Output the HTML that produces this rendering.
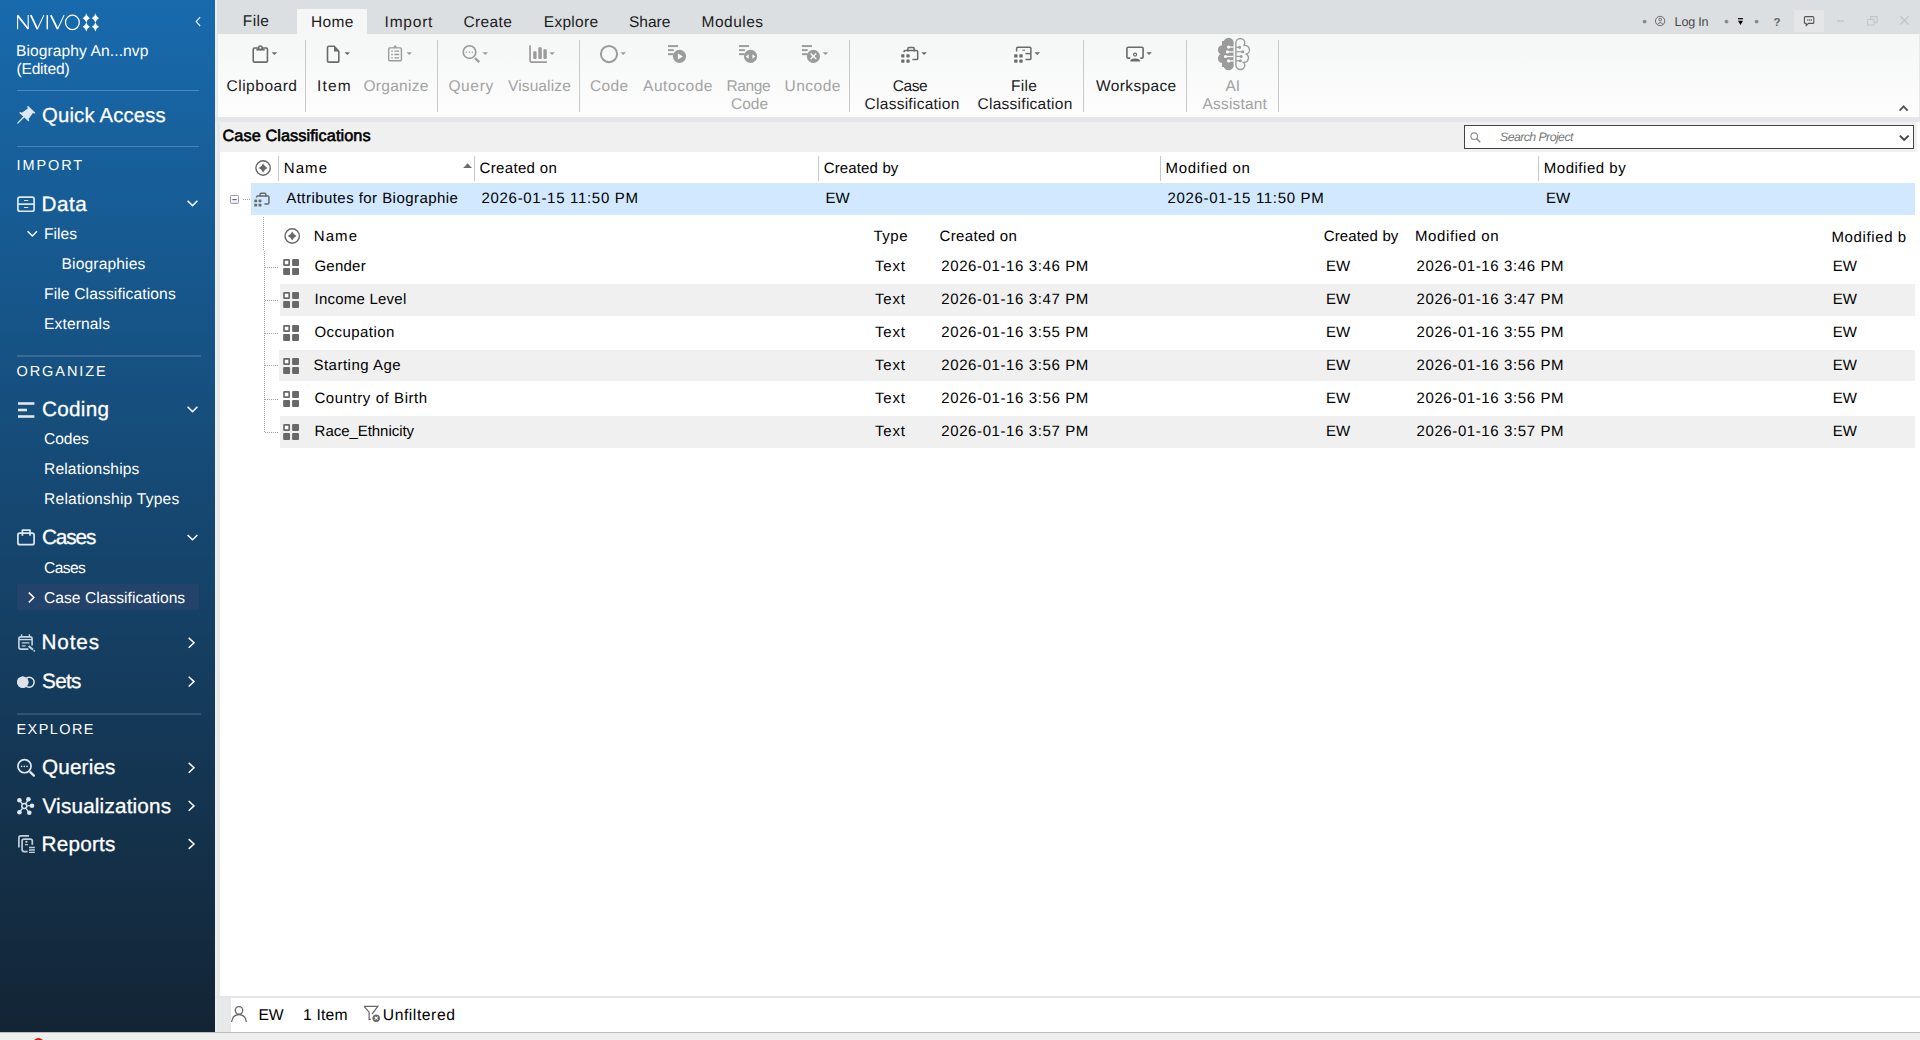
<!DOCTYPE html>
<html><head><meta charset="utf-8"><title>NVivo</title>
<style>
html,body{margin:0;padding:0;width:1920px;height:1040px;overflow:hidden;background:#fff;font-family:"Liberation Sans",sans-serif}
.t{position:absolute;white-space:pre;font-family:"Liberation Sans",sans-serif;text-rendering:geometricPrecision}
.b{position:absolute}
svg{position:absolute;overflow:visible}
</style></head><body>
<!-- backgrounds -->
<div class="b" style="left:0;top:0;width:1920px;height:1040px;background:#e7e8ea"></div>
<div class="b" style="left:215px;top:0;width:2px;height:1032px;background:#eeeeee"></div>
<div class="b" style="left:217px;top:0;width:1703px;height:34px;background:#dcdfe2"></div>
<div class="b" style="left:297px;top:9px;width:70px;height:25px;background:#f5f6f6"></div>
<div class="b" style="left:1794px;top:10px;width:30px;height:22px;background:#e5e6e7"></div>
<div class="b" style="left:218px;top:34px;width:1701px;height:83px;background:linear-gradient(#f5f6f6,#fdfdfd)"></div>
<div class="b" style="left:215px;top:117px;width:1705px;height:5px;background:#e4e6e9"></div>
<div class="b" style="left:220px;top:122px;width:1697px;height:30px;background:#f0f0f0"></div>
<div class="b" style="left:220px;top:152px;width:1700px;height:844px;background:#fff"></div>
<div class="b" style="left:1917px;top:122px;width:3px;height:30px;background:#fff"></div>
<!-- selected row -->
<div class="b" style="left:251px;top:183.2px;width:1664px;height:31.6px;background:#d1e8ff"></div>
<!-- alt rows -->
<div class="b" style="left:280px;top:284px;width:1635px;height:31.6px;background:#f0f0f0"></div>
<div class="b" style="left:279px;top:350.25px;width:1636px;height:30.4px;background:#f0f0f0"></div>
<div class="b" style="left:280px;top:416.25px;width:1635px;height:31.5px;background:#f0f0f0"></div>
<!-- status bar -->
<div class="b" style="left:215px;top:996px;width:1705px;height:2px;background:#e4e6ea"></div>
<div class="b" style="left:231px;top:998px;width:1689px;height:34px;background:#fff"></div>
<div class="b" style="left:0;top:1032px;width:1920px;height:1px;background:#bdbdbd"></div>
<div class="b" style="left:0;top:1033px;width:1920px;height:7px;background:#eeeeee"></div>
<div class="b" style="left:28px;top:1033px;width:20px;height:7px;overflow:hidden"><div class="b" style="left:4.5px;top:4.7px;width:11px;height:11px;border-radius:6px;background:#cb2114"></div></div>
<!-- sidebar -->
<div class="b" style="left:0;top:0;width:215px;height:1032px;background:linear-gradient(#186aad,#132434)"></div>
<div class="b" style="left:17px;top:90px;width:182px;height:1px;background:#4a88bf"></div>
<div class="b" style="left:17px;top:146px;width:182px;height:1px;background:#4784b8"></div>
<div class="b" style="left:17px;top:355px;width:184px;height:2px;background:#3b6a96"></div>
<div class="b" style="left:17px;top:713px;width:184px;height:2px;background:#34536f"></div>
<div class="b" style="left:17px;top:584px;width:182px;height:26px;background:#24436b"></div>
<!-- search box -->
<div class="b" style="left:1464px;top:125px;width:448px;height:22px;background:#fff;border:1px solid #444"></div>
<!-- ribbon separators -->
<div class="b" style="left:305px;top:40px;width:1px;height:72px;background:#c9c9c9"></div>
<div class="b" style="left:437px;top:40px;width:1px;height:72px;background:#c9c9c9"></div>
<div class="b" style="left:579px;top:40px;width:1px;height:72px;background:#c9c9c9"></div>
<div class="b" style="left:849px;top:40px;width:1px;height:72px;background:#c9c9c9"></div>
<div class="b" style="left:1083px;top:40px;width:1px;height:72px;background:#c9c9c9"></div>
<div class="b" style="left:1186px;top:40px;width:1px;height:72px;background:#c9c9c9"></div>
<div class="b" style="left:1278px;top:40px;width:1px;height:72px;background:#c9c9c9"></div>
<!-- column separators -->
<div class="b" style="left:278px;top:156px;width:1px;height:25px;background:#c8c8c8"></div>
<div class="b" style="left:474px;top:156px;width:1px;height:25px;background:#c8c8c8"></div>
<div class="b" style="left:818px;top:156px;width:1px;height:25px;background:#c8c8c8"></div>
<div class="b" style="left:1160px;top:156px;width:1px;height:25px;background:#c8c8c8"></div>
<div class="b" style="left:1538px;top:156px;width:1px;height:25px;background:#c8c8c8"></div>

<svg style="left:0;top:0" width="1920" height="1040" viewBox="0 0 1920 1040">
<g stroke="#fff" fill="none" stroke-linejoin="miter">
<path d="M17.6 29.3V15.6M28.2 28.8V15.1" stroke-width="1.1"/>
<path d="M17.5 15.4L28.3 29" stroke-width="1.7"/>
<path d="M30.8 15.1L37.4 29.2" stroke-width="1.8"/><path d="M37.3 29.3L43.9 15.1" stroke-width="1.05"/>
<path d="M47.3 15.1V29.3" stroke-width="1.5"/>
<path d="M50.8 15.1L57.6 29.2" stroke-width="1.8"/><path d="M57.5 29.3L64.1 15.1" stroke-width="1.05"/>
<ellipse cx="72.4" cy="22.4" rx="6.9" ry="7.2" stroke-width="1.25"/>
</g>
<path fill="#fff" d="M86.3 13.6Q87.164 17.096 89.89999999999999 18.2Q87.164 19.304 86.3 22.799999999999997Q85.43599999999999 19.304 82.7 18.2Q85.43599999999999 17.096 86.3 13.6Z"/>
<path fill="#fff" d="M95.4 13.6Q96.26400000000001 17.096 99.0 18.2Q96.26400000000001 19.304 95.4 22.799999999999997Q94.536 19.304 91.80000000000001 18.2Q94.536 17.096 95.4 13.6Z"/>
<path fill="#fff" d="M86.3 22.200000000000003Q87.164 25.696 89.89999999999999 26.8Q87.164 27.904 86.3 31.4Q85.43599999999999 27.904 82.7 26.8Q85.43599999999999 25.696 86.3 22.200000000000003Z"/>
<path fill="#fff" d="M95.4 22.200000000000003Q96.26400000000001 25.696 99.0 26.8Q96.26400000000001 27.904 95.4 31.4Q94.536 27.904 91.80000000000001 26.8Q94.536 25.696 95.4 22.200000000000003Z"/>
<path d="M200.2 17.2L196.2 21.6L200.2 26" stroke="#e6eef6" stroke-width="1.2" fill="none"/>
<path fill="#dde8f2" d="M28.2 105.9L35.1 112.6Q35.5 113.7 34.4 113.6L32.9 112.9L28.6 119.1L29.3 120.6Q29 121.7 28 121.1L24.3 117.6L18.2 123.6Q17 124 17.3 122.8L23.2 116.6L19.4 113Q19 112 20.1 111.9L21.8 112.8L27.9 108.5L27.2 106.9Q27.2 105.8 28.2 105.9Z"/>
<g stroke="#dfe8f1" fill="none" stroke-width="1.7">
<rect x="17.9" y="197.05" width="16.2" height="14.2" rx="2"/>
<path d="M17.9 204.15H34.1"/>
<path d="M24.5 200.5H27.8M24.5 207.5H27.8" stroke-width="1.2" stroke-linecap="round"/>
</g>
<g fill="#dfe8f1"><rect x="18" y="402.2" width="16.4" height="2.6"/><rect x="18" y="408.7" width="9" height="2.6"/><rect x="18" y="415.2" width="16.4" height="2.6"/></g>
<g stroke="#dfe8f1" fill="none" stroke-width="1.7">
<rect x="17.9" y="533.1" width="16.2" height="11.6" rx="2"/>
<path d="M22.4 535.8V530.1H30V535.8" stroke-linejoin="round"/>
</g>
<g stroke="#c9d5e0" fill="none" stroke-width="1.6">
<path d="M28.4 649.1H20.8Q18.9 649.1 18.9 647.2V638.8Q18.9 636.9 20.8 636.9H30.2Q32.1 636.9 32.1 638.8V645.4"/>
<path d="M18.9 639.6H32.1" stroke-width="1.4"/>
<path d="M21.6 634.2V636.6M29.4 634.2V636.6" stroke-width="1.3"/>
<path d="M21.8 642.8H29.4M21.8 645.9H25.6" stroke-width="1.3"/>
<path d="M28.6 646L33 649.7" stroke-width="2.1"/>
<path d="M33.6 650.3L34.8 651.3" stroke-width="1.6"/>
</g>
<circle cx="22.75" cy="682.3" r="5.7" fill="#dde2e8"/>
<circle cx="29.2" cy="682.3" r="4.95" fill="none" stroke="#e2e8ee" stroke-width="1.5"/>
<circle cx="22.75" cy="682.3" r="5.7" fill="#dde2e8"/>
<g stroke="#dfe8f1" fill="none">
<circle cx="24.5" cy="766.2" r="6.55" stroke-width="1.7"/>
<path d="M30.3 772.2L33.9 775.6" stroke-width="2.3" stroke-linecap="round"/>
</g>
<g fill="#dfe8f1"><circle cx="21.6" cy="766.4" r="0.8"/><circle cx="24.3" cy="766.4" r="0.8"/><circle cx="27" cy="766.4" r="0.8"/></g>
<g stroke="#dfe8f1" stroke-width="1.3" fill="none">
<circle cx="24.3" cy="806.1" r="2.5" stroke-width="1.5"/>
<path d="M22.30 803.73L19.4 800.3"/>
<path d="M25.90 803.45L28.4 799.3"/>
<path d="M27.40 805.94L32 805.7"/>
<path d="M22.36 808.52L19.4 812.2"/>
<path d="M26.15 808.58L29.3 812.8"/>
</g>
<g fill="#dfe8f1">
<circle cx="19.4" cy="800.3" r="2.3"/>
<circle cx="28.4" cy="799.3" r="2.3"/>
<circle cx="32" cy="805.7" r="2.3"/>
<circle cx="19.4" cy="812.2" r="2.3"/>
<circle cx="29.3" cy="812.8" r="2.3"/>
</g>
<g stroke="#c3ced9" fill="none" stroke-width="1.7">
<path d="M29 835.9H20.9Q18.9 835.9 18.9 837.9V847.6"/>
<path d="M32.3 844.7V841.1Q32.3 839.1 30.3 839.1H24.1Q22.1 839.1 22.1 841.1V849.6Q22.1 851.6 24.1 851.6H27.6"/>
<path d="M24.9 844.7H28.1" stroke-width="1.2"/>
<path d="M29 847.5H34.9M29 849.95H34.9M29 852.4H34.9" stroke-width="1.4"/>
</g>
<circle cx="26.45" cy="841.8" r="1.15" fill="#c3ced9"/>
<g stroke="#fff" stroke-width="1.5" fill="none">
<path d="M187.6 200.8L192.5 205.60000000000002L197.4 200.8"/>
<path d="M187.6 406.8L192.5 411.6L197.4 406.8"/>
<path d="M187.6 535.0L192.5 539.8L197.4 535.0"/>
<path d="M188.7 637.9L194 642.8L188.7 647.6999999999999"/>
<path d="M188.7 676.7L194 681.6L188.7 686.5"/>
<path d="M188.7 762.9L194 767.8L188.7 772.6999999999999"/>
<path d="M188.7 801.0L194 805.9L188.7 810.8"/>
<path d="M188.7 839.1L194 844L188.7 848.9"/>
<path d="M27.6 231.3L32.3 236L37 231.3"/>
<path d="M28.8 592.6L33.8 597.5L28.8 602.4"/>
</g>
<g stroke="#6a6a6a" fill="none" stroke-width="1.6">
<rect x="253.25" y="48" width="14.2" height="14.1" rx="1.2"/>
<path d="M256.3 49.75H264.7" stroke-width="1.6"/>
<circle cx="260.35" cy="47.7" r="1.75" stroke-width="1.5" fill="#f6f7f7"/>
</g>
<path d="M271.6 52.3H277.2L274.4 55.1Z" fill="#6a6a6a"/>
<path d="M328.9 46.25H334.2L338.8 51.2V61.2Q338.8 62.1 337.9 62.1H328.9Q327.5 62.1 327.5 60.7V47.65Q327.5 46.25 328.9 46.25Z" stroke="#6a6a6a" fill="none" stroke-width="1.6" stroke-linejoin="round"/>
<path d="M334 46.2L338.9 51.4H334Z" fill="#6a6a6a"/>
<path d="M344.5 52.3H350.1L347.3 55.1Z" fill="#6a6a6a"/>
<g stroke="#9b9b9b" fill="none" stroke-width="1.4">
<rect x="388.7" y="47.9" width="12.7" height="12.9" rx="1"/>
<path d="M393.6 47.6L395.1 45.9L396.6 47.6" stroke-width="1.2"/>
<path d="M391.2 51.1H392.9M394.3 51.1H399.2M391.2 54.5H392.9M394.3 54.5H399.2M391.2 57.9H392.9M394.3 57.9H399.2" stroke-width="1.3"/>
</g>
<path d="M406.5 52.3H412L409.25 55.1Z" fill="#9b9b9b"/>
<g stroke="#9b9b9b" fill="none">
<circle cx="469.5" cy="52.05" r="6.3" stroke-width="1.6"/>
<path d="M474.9 58.1L479.3 62.1" stroke-width="2.3"/>
</g>
<g fill="#9b9b9b"><circle cx="466.3" cy="52.3" r="0.7"/><circle cx="469.3" cy="52.3" r="0.7"/><circle cx="472.3" cy="52.3" r="0.7"/></g>
<path d="M482.4 52.3H488L485.2 55.1Z" fill="#9b9b9b"/>
<path d="M530.05 45.2V60.6Q530.05 62.05 531.5 62.05H546.9" stroke="#9b9b9b" fill="none" stroke-width="1.7"/>
<g fill="#9b9b9b"><rect x="533.2" y="51.2" width="3.4" height="7.7" rx="0.8"/><rect x="538.3" y="47.2" width="3.5" height="11.7" rx="0.8"/><rect x="543.4" y="49.2" width="3.4" height="9.7" rx="0.8"/></g>
<path d="M549.3 52.3H554.9L552.0999999999999 55.1Z" fill="#9b9b9b"/>
<circle cx="609" cy="54.05" r="8.1" stroke="#9b9b9b" fill="none" stroke-width="2"/>
<path d="M620.4 52.3H626L623.2 55.1Z" fill="#9b9b9b"/>
<g fill="#9b9b9b"><rect x="668" y="45.1" width="10.05" height="1.95"/><rect x="668" y="49.15" width="5.8" height="1.95"/><rect x="668" y="53.2" width="5.6" height="1.95"/></g>
<circle cx="679.5" cy="56.3" r="6.6" fill="#9b9b9b"/>
<path d="M677.9 53.6V59.4L683 56.5Z" fill="#fbfbfb"/>
<g fill="#9b9b9b"><rect x="739.05" y="45.1" width="10.05" height="1.95"/><rect x="739.05" y="49.15" width="5.8" height="1.95"/><rect x="739.05" y="53.2" width="5.6" height="1.95"/></g>
<circle cx="750.55" cy="56.3" r="6.6" fill="#9b9b9b"/>
<path d="M745.75 56.5L748.65 54.3V58.7ZM755.3499999999999 56.5L752.4499999999999 54.3V58.7Z" fill="#fbfbfb"/>
<g fill="#9b9b9b"><rect x="801.9" y="45.1" width="10.05" height="1.95"/><rect x="801.9" y="49.15" width="5.8" height="1.95"/><rect x="801.9" y="53.2" width="5.6" height="1.95"/></g>
<circle cx="813.4" cy="56.3" r="6.6" fill="#9b9b9b"/>
<path d="M810.6 53.5L816.1999999999999 59.1M816.1999999999999 53.5L810.6 59.1" stroke="#fbfbfb" stroke-width="1.4" fill="none"/>
<path d="M822.6 52.3H828.2L825.4000000000001 55.1Z" fill="#9b9b9b"/>
<g stroke="#6a6a6a" fill="none" stroke-width="1.5">
<path d="M904 52.2V51.7Q904 50.5 905.2 50.5H916.5Q917.7 50.5 917.7 51.7V58.4Q917.7 59.6 916.5 59.6H912.4"/>
<path d="M907.9 51.6V48.4Q907.9 47.4 908.9 47.4H913.2Q914.2 47.4 914.2 48.4V51.6"/>
</g>
<rect x="901.20" y="54.20" width="3.25" height="3.25" rx="0.7" fill="#6a6a6a"/>
<rect x="901.20" y="59.40" width="3.25" height="3.25" rx="0.7" fill="#6a6a6a"/>
<rect x="906.40" y="54.20" width="3.25" height="3.25" rx="0.7" fill="#6a6a6a"/>
<rect x="906.40" y="59.40" width="3.25" height="3.25" rx="0.7" fill="#6a6a6a"/>
<path d="M921.3 52.3H926.9L924.0999999999999 55.1Z" fill="#6a6a6a"/>
<g stroke="#6a6a6a" fill="none" stroke-width="1.5">
<path d="M1016.6 51.5V48.5Q1016.6 47.35 1017.8 47.35H1029.7Q1030.9 47.35 1030.9 48.5V58.4Q1030.9 59.55 1029.7 59.55H1025.5"/>
<path d="M1025.5 53.6H1030.9"/>
<path d="M1022.3 50.2H1025.1" stroke-width="1"/>
</g>
<rect x="1014.20" y="54.30" width="3.3" height="3.3" rx="0.7" fill="#6a6a6a"/>
<rect x="1014.20" y="59.45" width="3.3" height="3.3" rx="0.7" fill="#6a6a6a"/>
<rect x="1019.35" y="54.30" width="3.3" height="3.3" rx="0.7" fill="#6a6a6a"/>
<rect x="1019.35" y="59.45" width="3.3" height="3.3" rx="0.7" fill="#6a6a6a"/>
<path d="M1034.4 52.2H1040.1L1037.25 54.9Z" fill="#6a6a6a"/>
<g stroke="#6a6a6a" fill="none" stroke-width="1.6">
<path d="M1130.2 58.1H1128.1Q1126.9 58.1 1126.9 56.9V48.4Q1126.9 47.2 1128.1 47.2H1141.9Q1143.1 47.2 1143.1 48.4V56.9Q1143.1 58.1 1141.9 58.1H1140.3"/>
<circle cx="1135.1" cy="54.6" r="1.5" stroke-width="1.2"/>
</g>
<path d="M1130.1 61.4Q1130.3 58.5 1135.15 58.5Q1140 58.5 1140.2 61.4Z" fill="#6a6a6a"/>
<path d="M1146.3 52.2H1151.9L1149.1 54.9Z" fill="#6a6a6a"/>
<clipPath id="bl"><rect x="1210" y="34" width="23.5" height="40"/></clipPath>
<g fill="#9b9b9b" clip-path="url(#bl)"><circle cx="1228.6" cy="43" r="5.2"/><circle cx="1222.6" cy="49.9" r="4.7"/><circle cx="1222.6" cy="58.4" r="4.7"/><circle cx="1228.6" cy="65" r="5.2"/><rect x="1222" y="41" width="12" height="26"/></g>
<g stroke="#fafafa" stroke-width="1.3" fill="#fafafa">
<path d="M1228.6 47.1H1233.6"/><circle cx="1228.6" cy="47.1" r="0.9"/>
<path d="M1227.4 51.9H1233.6"/><circle cx="1227.4" cy="51.9" r="0.9"/>
<path d="M1225.5 56.5H1233.6"/><circle cx="1225.5" cy="56.5" r="0.9"/>
<path d="M1228.6 60.9H1233.6"/><circle cx="1228.6" cy="60.9" r="0.9"/>
</g>
<path d="M1235.9 65.1V42.9A4.45 4.45 0 0 1 1244.8 42.9Q1244.8 44.6 1243.6 45.6A4.5 4.5 0 0 1 1246.3 54.2A4.5 4.5 0 0 1 1243.6 62.5Q1244.8 63.5 1244.8 65.1A4.45 4.45 0 0 1 1235.9 65.1Z" stroke="#9b9b9b" stroke-width="1.4" fill="none"/>
<g stroke="#9b9b9b" stroke-width="1.2" fill="#9b9b9b">
<path d="M1236 47.3H1239.6"/><circle cx="1239.6" cy="47.3" r="0.9"/>
<path d="M1236 51.8H1242.8"/><circle cx="1242.8" cy="51.8" r="0.9"/>
<path d="M1236 56.4H1241.1"/><circle cx="1241.1" cy="56.4" r="0.9"/>
<path d="M1236 60.8H1240.3"/><circle cx="1240.3" cy="60.8" r="0.9"/>
</g>
<path d="M1899.6 110.6L1903.6 106.4L1907.6 110.6" stroke="#555" stroke-width="1.9" fill="none"/>
<circle cx="1644.6" cy="21.6" r="1.9" fill="#8a8a8a"/>
<circle cx="1726.5" cy="21.6" r="1.9" fill="#8a8a8a"/>
<circle cx="1756.6" cy="21.6" r="1.9" fill="#8a8a8a"/>
<g stroke="#666" fill="none" stroke-width="0.95">
<circle cx="1660.1" cy="21" r="4.65"/>
<circle cx="1660.2" cy="19.6" r="1.35"/>
<path d="M1657.2 24.6Q1660.2 20.6 1663.2 24.6"/>
</g>
<rect x="1738" y="18.1" width="5" height="1.2" fill="#000"/>
<path d="M1738 20.8H1743L1740.5 24.9Z" fill="#000"/>
<g stroke="#555" fill="none" stroke-width="1.1">
<path d="M1806 23.4H1805.4Q1804.4 23.4 1804.4 22.4V17.6Q1804.4 16.6 1805.4 16.6H1812.8Q1813.8 16.6 1813.8 17.6V22.4Q1813.8 23.4 1812.8 23.4H1808.4L1806.3 25.6Z"/>
</g>
<g fill="#444"><rect x="1807.2" y="19.4" width="1.2" height="1.2"/><rect x="1809" y="19.4" width="1.2" height="1.2"/><rect x="1810.8" y="19.4" width="1.2" height="1.2"/></g>
<path d="M1837 21H1843.8" stroke="#c3c5c7" stroke-width="1.4"/>
<g stroke="#c3c5c7" fill="none" stroke-width="1.1"><rect x="1867.6" y="19.4" width="6.4" height="5.7"/><path d="M1870.6 19.2V16.6H1877.2V22.4H1874.2"/></g>
<path d="M1900.3 16.3L1908.7 24.6M1908.7 16.3L1900.3 24.6" stroke="#c3c5c7" stroke-width="1.4"/>
<g stroke="#8a8a8a" fill="none"><circle cx="1474.2" cy="136.2" r="3.3" stroke-width="1.1"/><path d="M1476.7 138.8L1480.2 142.3" stroke-width="1.5"/></g>
<path d="M1899.8 135.6L1904.2 140L1908.6 135.6" stroke="#444" stroke-width="1.9" fill="none"/>
<circle cx="263.1" cy="168" r="7.2" stroke="#686868" stroke-width="1.4" fill="none"/>
<path fill="#686868" d="M263.1 163.6Q264.42 166.68 267.5 168Q264.42 169.32 263.1 172.4Q261.78000000000003 169.32 258.70000000000005 168Q261.78000000000003 166.68 263.1 163.6Z"/>
<circle cx="292.2" cy="236" r="7.2" stroke="#686868" stroke-width="1.4" fill="none"/>
<path fill="#686868" d="M292.2 231.6Q293.52 234.68 296.59999999999997 236Q293.52 237.32 292.2 240.4Q290.88 237.32 287.8 236Q290.88 234.68 292.2 231.6Z"/>
<path d="M463.2 168H472L467.6 163.2Z" fill="#6b6b6b"/>
<defs><linearGradient id="mg" x1="0" y1="0" x2="0" y2="1"><stop offset="0.5" stop-color="#fff"/><stop offset="1" stop-color="#e2e2e2"/></linearGradient></defs>
<rect x="230.5" y="195.5" width="8" height="8" rx="1" fill="url(#mg)" stroke="#9b9b9b" stroke-width="1"/>
<path d="M232.4 199.6H236.8" stroke="#4758b3" stroke-width="1.1"/>
<path d="M243 199.5H250" stroke="#a0a0a0" stroke-width="1" stroke-dasharray="1 1"/>
<path d="M263.5 217V250" stroke="#a0a0a0" stroke-width="1" stroke-dasharray="1 1"/>
<path d="M264.5 251V432" stroke="#a0a0a0" stroke-width="1" stroke-dasharray="1 1"/>
<path d="M265 267.5H278" stroke="#a0a0a0" stroke-width="1" stroke-dasharray="1 1"/>
<path d="M265 300.5H278" stroke="#a0a0a0" stroke-width="1" stroke-dasharray="1 1"/>
<path d="M265 333.5H278" stroke="#a0a0a0" stroke-width="1" stroke-dasharray="1 1"/>
<path d="M265 365.5H278" stroke="#a0a0a0" stroke-width="1" stroke-dasharray="1 1"/>
<path d="M265 399.5H278" stroke="#a0a0a0" stroke-width="1" stroke-dasharray="1 1"/>
<path d="M265 432.5H278" stroke="#a0a0a0" stroke-width="1" stroke-dasharray="1 1"/>
<g stroke="#6a6a6a" fill="none" stroke-width="1.5">
<path d="M256.6 197.4V196.9Q256.6 195.9 257.6 195.9H267.9Q268.9 195.9 268.9 196.9V203Q268.9 204 267.9 204H264.4"/>
<path d="M260.1 196.8V194.2Q260.1 193.2 261.1 193.2H264.8Q265.8 193.2 265.8 194.2V196.8"/>
</g>
<rect x="254.30" y="199.50" width="2.8" height="2.8" rx="0.5" fill="#6a6a6a"/>
<rect x="254.30" y="203.80" width="2.8" height="2.8" rx="0.5" fill="#6a6a6a"/>
<rect x="258.60" y="199.50" width="2.8" height="2.8" rx="0.5" fill="#6a6a6a"/>
<rect x="258.60" y="203.80" width="2.8" height="2.8" rx="0.5" fill="#6a6a6a"/>
<rect x="284.0" y="259.95" width="5.2" height="5.2" rx="0.4" fill="#fff" stroke="#686868" stroke-width="1.7"/>
<rect x="292.09999999999997" y="259.10" width="6.9" height="6.9" rx="1" fill="#686868"/>
<rect x="283.15" y="268.05" width="6.9" height="6.9" rx="1" fill="#686868"/>
<rect x="292.09999999999997" y="268.05" width="6.9" height="6.9" rx="1" fill="#686868"/>
<rect x="284.0" y="292.95" width="5.2" height="5.2" rx="0.4" fill="#fff" stroke="#686868" stroke-width="1.7"/>
<rect x="292.09999999999997" y="292.10" width="6.9" height="6.9" rx="1" fill="#686868"/>
<rect x="283.15" y="301.05" width="6.9" height="6.9" rx="1" fill="#686868"/>
<rect x="292.09999999999997" y="301.05" width="6.9" height="6.9" rx="1" fill="#686868"/>
<rect x="284.0" y="325.95" width="5.2" height="5.2" rx="0.4" fill="#fff" stroke="#686868" stroke-width="1.7"/>
<rect x="292.09999999999997" y="325.10" width="6.9" height="6.9" rx="1" fill="#686868"/>
<rect x="283.15" y="334.05" width="6.9" height="6.9" rx="1" fill="#686868"/>
<rect x="292.09999999999997" y="334.05" width="6.9" height="6.9" rx="1" fill="#686868"/>
<rect x="284.0" y="358.95" width="5.2" height="5.2" rx="0.4" fill="#fff" stroke="#686868" stroke-width="1.7"/>
<rect x="292.09999999999997" y="358.10" width="6.9" height="6.9" rx="1" fill="#686868"/>
<rect x="283.15" y="367.05" width="6.9" height="6.9" rx="1" fill="#686868"/>
<rect x="292.09999999999997" y="367.05" width="6.9" height="6.9" rx="1" fill="#686868"/>
<rect x="284.0" y="391.95" width="5.2" height="5.2" rx="0.4" fill="#fff" stroke="#686868" stroke-width="1.7"/>
<rect x="292.09999999999997" y="391.10" width="6.9" height="6.9" rx="1" fill="#686868"/>
<rect x="283.15" y="400.05" width="6.9" height="6.9" rx="1" fill="#686868"/>
<rect x="292.09999999999997" y="400.05" width="6.9" height="6.9" rx="1" fill="#686868"/>
<rect x="284.0" y="424.95" width="5.2" height="5.2" rx="0.4" fill="#fff" stroke="#686868" stroke-width="1.7"/>
<rect x="292.09999999999997" y="424.10" width="6.9" height="6.9" rx="1" fill="#686868"/>
<rect x="283.15" y="433.05" width="6.9" height="6.9" rx="1" fill="#686868"/>
<rect x="292.09999999999997" y="433.05" width="6.9" height="6.9" rx="1" fill="#686868"/>
<g stroke="#666" fill="none" stroke-width="1.3">
<circle cx="239" cy="1010.3" r="3.75"/>
<path d="M231.6 1022Q232.6 1014.6 239 1014.6Q245.4 1014.6 246.4 1022"/>
<path d="M363.9 1006.4H377.9L372 1014.2M364.3 1006.6L369.1 1012.2V1019.3H370.8" stroke-width="1.2"/>
</g>
<circle cx="376.2" cy="1018.2" r="3.7" fill="#666"/>
<path d="M374.7 1016.7L377.7 1019.7M377.7 1016.7L374.7 1019.7" stroke="#fff" stroke-width="1.1"/>
</svg>
<span class="t" style="left:16px;top:41.6px;font-size:15.6px;line-height:20px;color:#fff;letter-spacing:0.088px">Biography An...nvp</span>
<span class="t" style="left:16.5px;top:60.4px;font-size:15.6px;line-height:20px;color:#fff;letter-spacing:-0.214px">(Edited)</span>
<span class="t" style="left:42px;top:102.9px;font-size:20.3px;line-height:26px;color:#fff;letter-spacing:0.182px;-webkit-text-stroke:0.25px #fff">Quick Access</span>
<span class="t" style="left:16.5px;top:157px;font-size:14.5px;line-height:19px;color:#fff;letter-spacing:1.9px">IMPORT</span>
<span class="t" style="left:41.5px;top:191.25px;font-size:20.7px;line-height:27px;color:#fff;letter-spacing:0.5px;-webkit-text-stroke:0.3px #fff">Data</span>
<span class="t" style="left:44px;top:224.75px;font-size:15.6px;line-height:20px;color:#fff;letter-spacing:0.0px">Files</span>
<span class="t" style="left:61.5px;top:254.75px;font-size:15.6px;line-height:20px;color:#fff;letter-spacing:0.15px">Biographies</span>
<span class="t" style="left:44px;top:284.75px;font-size:15.6px;line-height:20px;color:#fff;letter-spacing:0.137px">File Classifications</span>
<span class="t" style="left:44px;top:314.75px;font-size:15.6px;line-height:20px;color:#fff;letter-spacing:0.125px">Externals</span>
<span class="t" style="left:16.5px;top:362.6px;font-size:14.5px;line-height:19px;color:#fff;letter-spacing:1.929px">ORGANIZE</span>
<span class="t" style="left:42px;top:396.25px;font-size:20.7px;line-height:27px;color:#fff;letter-spacing:0.3px;-webkit-text-stroke:0.3px #fff">Coding</span>
<span class="t" style="left:44px;top:430.4px;font-size:15.6px;line-height:20px;color:#fff;letter-spacing:-0.062px">Codes</span>
<span class="t" style="left:44px;top:460.4px;font-size:15.6px;line-height:20px;color:#fff;letter-spacing:0.146px">Relationships</span>
<span class="t" style="left:44px;top:490.4px;font-size:15.6px;line-height:20px;color:#fff;letter-spacing:0.221px">Relationship Types</span>
<span class="t" style="left:42px;top:524.4px;font-size:20.7px;line-height:27px;color:#fff;letter-spacing:-1.1px;-webkit-text-stroke:0.3px #fff">Cases</span>
<span class="t" style="left:44px;top:558.5px;font-size:15.6px;line-height:20px;color:#fff;letter-spacing:-0.6px">Cases</span>
<span class="t" style="left:44px;top:588.5px;font-size:15.6px;line-height:20px;color:#fff;letter-spacing:0.039px">Case Classifications</span>
<span class="t" style="left:41.5px;top:629.4px;font-size:20.7px;line-height:27px;color:#fff;letter-spacing:0.875px;-webkit-text-stroke:0.3px #fff">Notes</span>
<span class="t" style="left:42px;top:668px;font-size:20.7px;line-height:27px;color:#fff;letter-spacing:-0.667px;-webkit-text-stroke:0.3px #fff">Sets</span>
<span class="t" style="left:16.5px;top:720.75px;font-size:14.5px;line-height:19px;color:#fff;letter-spacing:1.417px">EXPLORE</span>
<span class="t" style="left:42px;top:754.4px;font-size:20.7px;line-height:27px;color:#fff;letter-spacing:0.167px;-webkit-text-stroke:0.3px #fff">Queries</span>
<span class="t" style="left:42.5px;top:792.5px;font-size:20.7px;line-height:27px;color:#fff;letter-spacing:0.192px;-webkit-text-stroke:0.3px #fff">Visualizations</span>
<span class="t" style="left:41.5px;top:830.6px;font-size:20.7px;line-height:27px;color:#fff;letter-spacing:0.25px;-webkit-text-stroke:0.3px #fff">Reports</span>
<span class="t" style="left:242.75px;top:11.6px;font-size:15.5px;line-height:20px;color:#1b1b1b;letter-spacing:0.417px">File</span>
<span class="t" style="left:310.9px;top:12.9px;font-size:15.5px;line-height:20px;color:#1b1b1b;letter-spacing:0.367px">Home</span>
<span class="t" style="left:384.6px;top:12.9px;font-size:15.5px;line-height:20px;color:#1b1b1b;letter-spacing:0.78px">Import</span>
<span class="t" style="left:463.4px;top:12.9px;font-size:15.5px;line-height:20px;color:#1b1b1b;letter-spacing:0.37px">Create</span>
<span class="t" style="left:543.75px;top:12.9px;font-size:15.5px;line-height:20px;color:#1b1b1b;letter-spacing:0.292px">Explore</span>
<span class="t" style="left:629px;top:12.9px;font-size:15.5px;line-height:20px;color:#1b1b1b;letter-spacing:0.0px">Share</span>
<span class="t" style="left:701.5px;top:12.9px;font-size:15.5px;line-height:20px;color:#1b1b1b;letter-spacing:0.5px">Modules</span>
<span class="t" style="left:226.5px;top:76.6px;font-size:15.5px;line-height:20px;color:#1b1b1b;letter-spacing:0.513px">Clipboard</span>
<span class="t" style="left:317px;top:76.6px;font-size:15.5px;line-height:20px;color:#1b1b1b;letter-spacing:1.133px">Item</span>
<span class="t" style="left:363.4px;top:76.6px;font-size:15.5px;line-height:20px;color:#a3a3a3;letter-spacing:0.3px">Organize</span>
<span class="t" style="left:448.4px;top:76.6px;font-size:15.5px;line-height:20px;color:#a3a3a3;letter-spacing:0.65px">Query</span>
<span class="t" style="left:508px;top:76.6px;font-size:15.5px;line-height:20px;color:#a3a3a3;letter-spacing:0.125px">Visualize</span>
<span class="t" style="left:590px;top:76.6px;font-size:15.5px;line-height:20px;color:#a3a3a3;letter-spacing:0.333px">Code</span>
<span class="t" style="left:643px;top:76.6px;font-size:15.5px;line-height:20px;color:#a3a3a3;letter-spacing:0.571px">Autocode</span>
<span class="t" style="left:726.5px;top:76.6px;font-size:15.5px;line-height:20px;color:#a3a3a3;letter-spacing:-0.375px">Range</span>
<span class="t" style="left:731px;top:95.4px;font-size:15.5px;line-height:20px;color:#a3a3a3;letter-spacing:0.0px">Code</span>
<span class="t" style="left:784.6px;top:76.6px;font-size:15.5px;line-height:20px;color:#a3a3a3;letter-spacing:0.48px">Uncode</span>
<span class="t" style="left:892.75px;top:76.6px;font-size:15.5px;line-height:20px;color:#1b1b1b;letter-spacing:-0.417px">Case</span>
<span class="t" style="left:864.6px;top:95.4px;font-size:15.5px;line-height:20px;color:#1b1b1b;letter-spacing:0.262px">Classification</span>
<span class="t" style="left:1011px;top:76.6px;font-size:15.5px;line-height:20px;color:#1b1b1b;letter-spacing:0.333px">File</span>
<span class="t" style="left:977.5px;top:95.4px;font-size:15.5px;line-height:20px;color:#1b1b1b;letter-spacing:0.269px">Classification</span>
<span class="t" style="left:1096px;top:76.6px;font-size:15.5px;line-height:20px;color:#1b1b1b;letter-spacing:0.375px">Workspace</span>
<span class="t" style="left:1225.4px;top:76.6px;font-size:15.5px;line-height:20px;color:#a3a3a3;letter-spacing:0px">AI</span>
<span class="t" style="left:1202.5px;top:95.4px;font-size:15.5px;line-height:20px;color:#a3a3a3;letter-spacing:0.188px">Assistant</span>
<span class="t" style="left:1674.6px;top:14.0px;font-size:12.6px;line-height:16px;color:#4a4a4a;letter-spacing:-0.22px">Log In</span>
<span class="t" style="left:1773.4px;top:15.6px;font-size:11.5px;line-height:15px;color:#666;letter-spacing:0px;font-weight:700">?</span>
<span class="t" style="left:222.5px;top:125.8px;font-size:16.3px;line-height:21px;color:#000;letter-spacing:0.079px;-webkit-text-stroke:0.6px #000">Case Classifications</span>
<span class="t" style="left:1500px;top:128.6px;font-size:12.3px;line-height:16px;color:#777;letter-spacing:-0.558px;font-style:italic">Search Project</span>
<span class="t" style="left:283.75px;top:158.75px;font-size:15px;line-height:20px;color:#000;letter-spacing:1.083px">Name</span>
<span class="t" style="left:479.6px;top:158.75px;font-size:15px;line-height:20px;color:#000;letter-spacing:0.333px">Created on</span>
<span class="t" style="left:823.75px;top:158.75px;font-size:15px;line-height:20px;color:#000;letter-spacing:0.139px">Created by</span>
<span class="t" style="left:1165.6px;top:158.75px;font-size:15px;line-height:20px;color:#000;letter-spacing:0.68px">Modified on</span>
<span class="t" style="left:1543.75px;top:158.75px;font-size:15px;line-height:20px;color:#000;letter-spacing:0.525px">Modified by</span>
<span class="t" style="left:286.25px;top:188.6px;font-size:15px;line-height:20px;color:#000;letter-spacing:0.448px">Attributes for Biographie</span>
<span class="t" style="left:481.5px;top:188.6px;font-size:15px;line-height:20px;color:#000;letter-spacing:0.694px">2026-01-15 11:50 PM</span>
<span class="t" style="left:825.6px;top:188.6px;font-size:15px;line-height:20px;color:#000;letter-spacing:0px">EW</span>
<span class="t" style="left:1167.5px;top:188.6px;font-size:15px;line-height:20px;color:#000;letter-spacing:0.681px">2026-01-15 11:50 PM</span>
<span class="t" style="left:1546px;top:188.6px;font-size:15px;line-height:20px;color:#000;letter-spacing:0px">EW</span>
<span class="t" style="left:313.75px;top:226.6px;font-size:15px;line-height:20px;color:#000;letter-spacing:1.083px">Name</span>
<span class="t" style="left:873.4px;top:226.6px;font-size:15px;line-height:20px;color:#000;letter-spacing:0.533px">Type</span>
<span class="t" style="left:939.6px;top:226.6px;font-size:15px;line-height:20px;color:#000;letter-spacing:0.333px">Created on</span>
<span class="t" style="left:1323.75px;top:226.6px;font-size:15px;line-height:20px;color:#000;letter-spacing:0.139px">Created by</span>
<span class="t" style="left:1415px;top:226.6px;font-size:15px;line-height:20px;color:#000;letter-spacing:0.6px">Modified on</span>
<span class="t" style="left:1831.5px;top:227.6px;font-size:15px;line-height:20px;color:#000;letter-spacing:0.611px">Modified b</span>
<span class="t" style="left:314.4px;top:256.6px;font-size:15px;line-height:20px;color:#000;letter-spacing:0.24px">Gender</span>
<span class="t" style="left:875px;top:256.6px;font-size:15px;line-height:20px;color:#000;letter-spacing:0.8px">Text</span>
<span class="t" style="left:941.25px;top:256.6px;font-size:15px;line-height:20px;color:#000;letter-spacing:0.603px">2026-01-16 3:46 PM</span>
<span class="t" style="left:1326px;top:256.6px;font-size:15px;line-height:20px;color:#000;letter-spacing:0px">EW</span>
<span class="t" style="left:1416.5px;top:256.6px;font-size:15px;line-height:20px;color:#000;letter-spacing:0.603px">2026-01-16 3:46 PM</span>
<span class="t" style="left:1832.75px;top:256.6px;font-size:15px;line-height:20px;color:#000;letter-spacing:0px">EW</span>
<span class="t" style="left:314.6px;top:289.6px;font-size:15px;line-height:20px;color:#000;letter-spacing:0.218px">Income Level</span>
<span class="t" style="left:875px;top:289.6px;font-size:15px;line-height:20px;color:#000;letter-spacing:0.8px">Text</span>
<span class="t" style="left:941.25px;top:289.6px;font-size:15px;line-height:20px;color:#000;letter-spacing:0.603px">2026-01-16 3:47 PM</span>
<span class="t" style="left:1326px;top:289.6px;font-size:15px;line-height:20px;color:#000;letter-spacing:0px">EW</span>
<span class="t" style="left:1416.5px;top:289.6px;font-size:15px;line-height:20px;color:#000;letter-spacing:0.603px">2026-01-16 3:47 PM</span>
<span class="t" style="left:1832.75px;top:289.6px;font-size:15px;line-height:20px;color:#000;letter-spacing:0px">EW</span>
<span class="t" style="left:314.4px;top:322.6px;font-size:15px;line-height:20px;color:#000;letter-spacing:0.456px">Occupation</span>
<span class="t" style="left:875px;top:322.6px;font-size:15px;line-height:20px;color:#000;letter-spacing:0.8px">Text</span>
<span class="t" style="left:941.25px;top:322.6px;font-size:15px;line-height:20px;color:#000;letter-spacing:0.603px">2026-01-16 3:55 PM</span>
<span class="t" style="left:1326px;top:322.6px;font-size:15px;line-height:20px;color:#000;letter-spacing:0px">EW</span>
<span class="t" style="left:1416.5px;top:322.6px;font-size:15px;line-height:20px;color:#000;letter-spacing:0.603px">2026-01-16 3:55 PM</span>
<span class="t" style="left:1832.75px;top:322.6px;font-size:15px;line-height:20px;color:#000;letter-spacing:0px">EW</span>
<span class="t" style="left:313.4px;top:355.6px;font-size:15px;line-height:20px;color:#000;letter-spacing:0.509px">Starting Age</span>
<span class="t" style="left:875px;top:355.6px;font-size:15px;line-height:20px;color:#000;letter-spacing:0.8px">Text</span>
<span class="t" style="left:941.25px;top:355.6px;font-size:15px;line-height:20px;color:#000;letter-spacing:0.603px">2026-01-16 3:56 PM</span>
<span class="t" style="left:1326px;top:355.6px;font-size:15px;line-height:20px;color:#000;letter-spacing:0px">EW</span>
<span class="t" style="left:1416.5px;top:355.6px;font-size:15px;line-height:20px;color:#000;letter-spacing:0.603px">2026-01-16 3:56 PM</span>
<span class="t" style="left:1832.75px;top:355.6px;font-size:15px;line-height:20px;color:#000;letter-spacing:0px">EW</span>
<span class="t" style="left:314.4px;top:388.6px;font-size:15px;line-height:20px;color:#000;letter-spacing:0.573px">Country of Birth</span>
<span class="t" style="left:875px;top:388.6px;font-size:15px;line-height:20px;color:#000;letter-spacing:0.8px">Text</span>
<span class="t" style="left:941.25px;top:388.6px;font-size:15px;line-height:20px;color:#000;letter-spacing:0.603px">2026-01-16 3:56 PM</span>
<span class="t" style="left:1326px;top:388.6px;font-size:15px;line-height:20px;color:#000;letter-spacing:0px">EW</span>
<span class="t" style="left:1416.5px;top:388.6px;font-size:15px;line-height:20px;color:#000;letter-spacing:0.603px">2026-01-16 3:56 PM</span>
<span class="t" style="left:1832.75px;top:388.6px;font-size:15px;line-height:20px;color:#000;letter-spacing:0px">EW</span>
<span class="t" style="left:314.6px;top:421.6px;font-size:15px;line-height:20px;color:#000;letter-spacing:-0.046px">Race_Ethnicity</span>
<span class="t" style="left:875px;top:421.6px;font-size:15px;line-height:20px;color:#000;letter-spacing:0.8px">Text</span>
<span class="t" style="left:941.25px;top:421.6px;font-size:15px;line-height:20px;color:#000;letter-spacing:0.603px">2026-01-16 3:57 PM</span>
<span class="t" style="left:1326px;top:421.6px;font-size:15px;line-height:20px;color:#000;letter-spacing:0px">EW</span>
<span class="t" style="left:1416.5px;top:421.6px;font-size:15px;line-height:20px;color:#000;letter-spacing:0.603px">2026-01-16 3:57 PM</span>
<span class="t" style="left:1832.75px;top:421.6px;font-size:15px;line-height:20px;color:#000;letter-spacing:0px">EW</span>
<span class="t" style="left:258.4px;top:1005.8px;font-size:15.7px;line-height:20px;color:#000;letter-spacing:0px">EW</span>
<span class="t" style="left:303px;top:1005.8px;font-size:15.7px;line-height:20px;color:#000;letter-spacing:0.2px">1 Item</span>
<span class="t" style="left:382.75px;top:1005.8px;font-size:15.7px;line-height:20px;color:#000;letter-spacing:0.556px">Unfiltered</span>
</body></html>
